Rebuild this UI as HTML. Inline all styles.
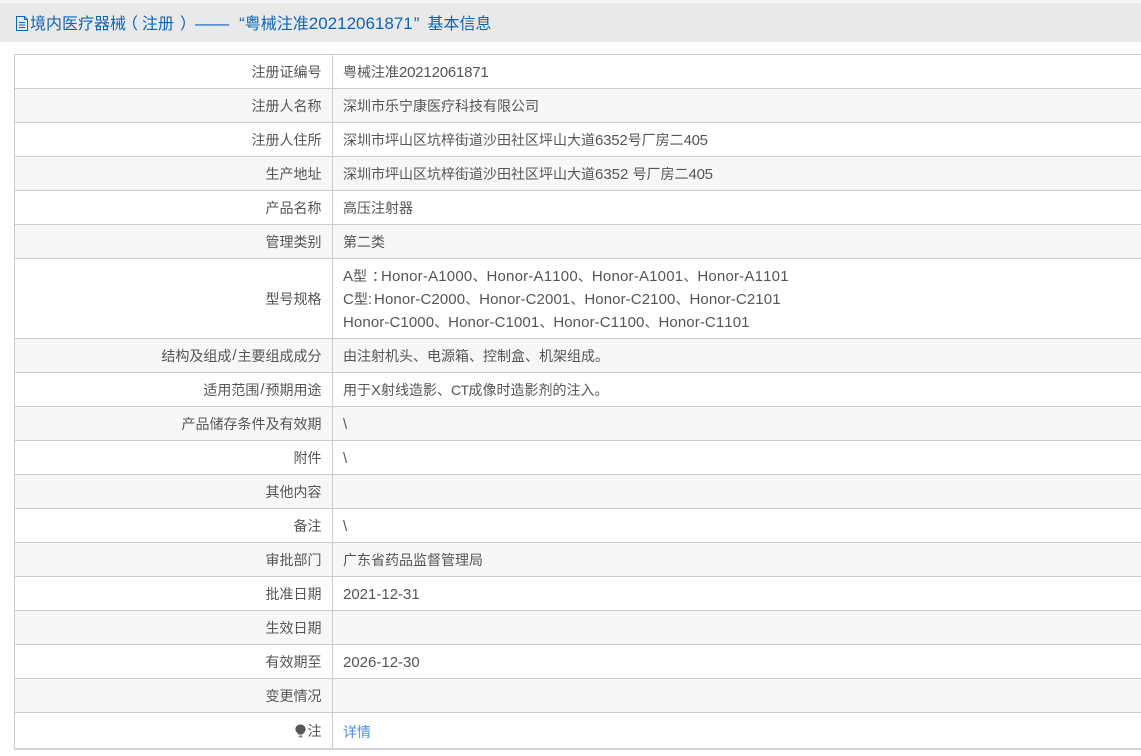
<!DOCTYPE html>
<html lang="zh-CN">
<head>
<meta charset="utf-8">
<title>基本信息</title>
<style>
html,body{margin:0;padding:0;background:#fff;}
body{width:1141px;height:756px;overflow:hidden;position:relative;font-family:"Liberation Sans","Noto Sans CJK SC",sans-serif;font-size:14px;color:#555;font-kerning:none;}
.top{position:absolute;left:0;top:0;width:1141px;height:3px;background:#f7f7f7;}
.head{position:absolute;left:0;top:3px;width:1141px;height:39px;background:#e9e9e9;}
.head svg{position:absolute;left:15px;top:13px;}
.head>span{position:absolute;left:30px;top:0;line-height:42px;font-size:16px;color:#0a66b7;white-space:pre;}
.h{font-size:17px;}
.t{position:absolute;left:14px;top:54px;width:1127px;border-top:1px solid #ccc;}
.r{position:relative;height:33px;border-left:1px solid #ccc;border-bottom:1px solid #ccc;background:#fff;}
.r.g{background:#f7f7f7;}
.r.tall{height:79px;}
.r.last{height:35px;border-bottom:2px solid #d4d4dc;}
.l{position:absolute;left:0;top:0;bottom:0;width:306.5px;display:flex;align-items:center;justify-content:flex-end;white-space:pre;}
.v{position:absolute;left:317px;top:0;bottom:0;right:0;border-left:1px solid #ccc;padding-left:10px;padding-top:2px;display:flex;flex-direction:column;justify-content:center;line-height:23px;white-space:pre;}
.last .v{padding-top:4px;}
.v a{color:#4a90e2;text-decoration:none;}
.e{font-size:15px;}
.n{font-size:15px;letter-spacing:-.2px;}
.m{font-size:15px;letter-spacing:-.3px;}
.ha{font-size:15px;letter-spacing:.2px;}
.hc{font-size:15px;letter-spacing:.1px;}
.s{font-size:15px;margin:0 1px;}
.c{position:relative;left:5px;}
.b{display:inline-block;vertical-align:middle;margin-right:2px;}
</style>
</head>
<body>
<div class="top"></div>
<div class="head">
<svg width="14" height="15" viewBox="0 0 14 15" fill="none" stroke="#0a66b7" stroke-width="1"><path d="M1.5 .5H9.5L12.5 3.5V14.5H1.5Z"/><path d="M9.5 .5V3.5H12.5"/><path d="M4 6.5H10M4 9H10M4 11.5H10"/></svg>
<span>境内医疗器械<span style="position:relative;left:-4px">（</span>注册<span style="position:relative;left:6px">）</span><span class="h" style="margin-left:5px">——</span><span class="h" style="margin-left:10px">“</span>粤械注准<span class="h">20212061871</span><span class="h" style="margin-left:1px">”</span><span style="margin-left:8px">基本信息</span></span>
</div>
<div class="t">
<div class="r"><div class="l">注册证编号</div><div class="v"><div>粤械注准<span class="n">20212061871</span></div></div></div>
<div class="r g"><div class="l">注册人名称</div><div class="v"><div>深圳市乐宁康医疗科技有限公司</div></div></div>
<div class="r"><div class="l">注册人住所</div><div class="v"><div>深圳市坪山区坑梓街道沙田社区坪山大道<span class="n">6352</span>号厂房二<span class="m">405</span></div></div></div>
<div class="r g"><div class="l">生产地址</div><div class="v"><div>深圳市坪山区坑梓街道沙田社区坪山大道<span class="e">6352 </span>号厂房二<span class="m">405</span></div></div></div>
<div class="r"><div class="l">产品名称</div><div class="v"><div>高压注射器</div></div></div>
<div class="r g"><div class="l">管理类别</div><div class="v"><div>第二类</div></div></div>
<div class="r tall"><div class="l">型号规格</div><div class="v"><div><span class="e">A</span>型<span class="c">：</span><span class="ha">Honor-A1000</span>、<span class="ha">Honor-A1100</span>、<span class="ha">Honor-A1001</span>、<span class="ha">Honor-A1101</span></div><div><span class="e">C</span>型<span class="e">:</span><span class="hc" style="margin-left:2px">Honor-C2000</span>、<span class="hc">Honor-C2001</span>、<span class="hc">Honor-C2100</span>、<span class="hc">Honor-C2101</span></div><div><span class="hc">Honor-C1000</span>、<span class="hc">Honor-C1001</span>、<span class="hc">Honor-C1100</span>、<span class="hc">Honor-C1101</span></div></div></div>
<div class="r g"><div class="l">结构及组成<span class="s">/</span>主要组成成分</div><div class="v"><div>由注射机头、电源箱、控制盒、机架组成。</div></div></div>
<div class="r"><div class="l">适用范围<span class="s">/</span>预期用途</div><div class="v"><div>用于<span class="e">X</span>射线造影、<span style="letter-spacing:-.6px">CT</span>成像时造影剂的注入。</div></div></div>
<div class="r g"><div class="l">产品储存条件及有效期</div><div class="v"><div class="e">\</div></div></div>
<div class="r"><div class="l">附件</div><div class="v"><div class="e">\</div></div></div>
<div class="r g"><div class="l">其他内容</div><div class="v"></div></div>
<div class="r"><div class="l">备注</div><div class="v"><div class="e">\</div></div></div>
<div class="r g"><div class="l">审批部门</div><div class="v"><div>广东省药品监督管理局</div></div></div>
<div class="r"><div class="l">批准日期</div><div class="v"><div class="e">2021-12-31</div></div></div>
<div class="r g"><div class="l">生效日期</div><div class="v"></div></div>
<div class="r"><div class="l">有效期至</div><div class="v"><div class="e">2026-12-30</div></div></div>
<div class="r g"><div class="l">变更情况</div><div class="v"></div></div>
<div class="r last"><div class="l"><svg class="b" width="11" height="14" viewBox="0 0 11 14"><path d="M5.5 .5C8.4 .5 10.6 2.6 10.6 5.3C10.6 7.4 8.8 8.7 7.7 10.5H3.4C2.3 8.7 .4 7.4 .4 5.3C.4 2.6 2.6 .5 5.5 .5Z" fill="#555"/><path d="M3.7 11.5H7.3V13.5H3.7Z" fill="#888"/></svg>注</div><div class="v"><div><a>详情</a></div></div></div>
</div>
</body>
</html>
